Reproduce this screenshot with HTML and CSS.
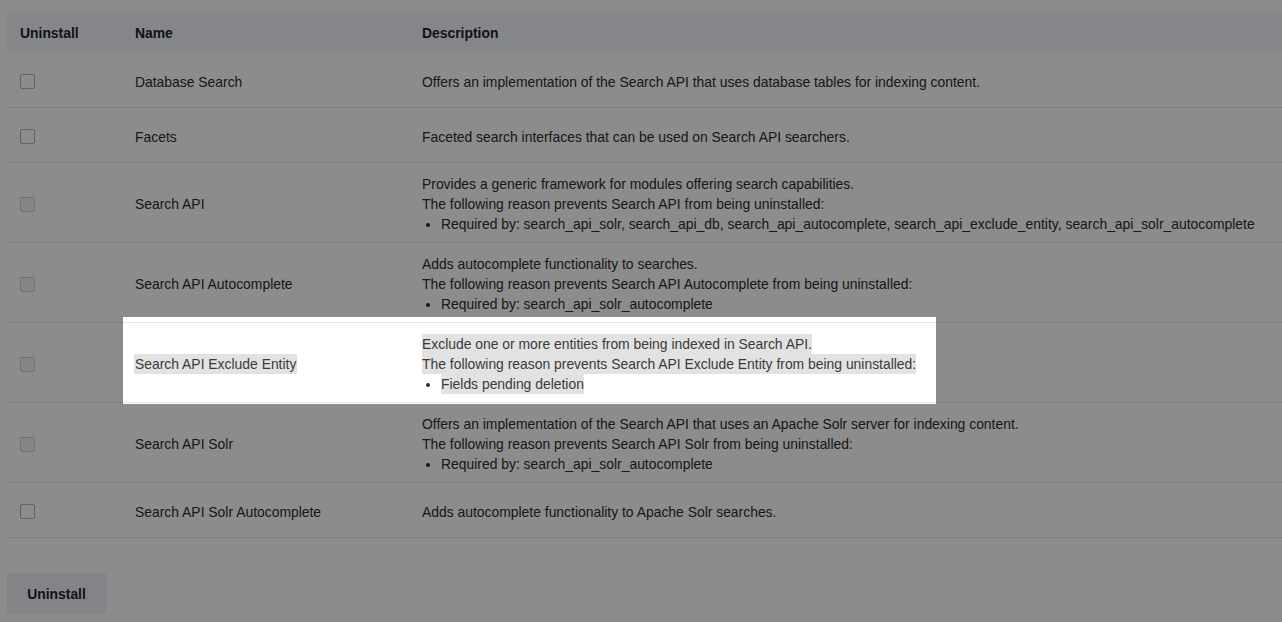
FILE: index.html
```html
<!DOCTYPE html>
<html lang="en">
<head>
<meta charset="utf-8">
<title>Uninstall modules</title>
<link rel="stylesheet" href="styles.css">
</head>
<body>
<main class="page">
  <div class="table-wrap">
    <table class="modules">
      <colgroup>
        <col class="col-check">
        <col class="col-name">
        <col class="col-desc">
      </colgroup>
      <thead>
        <tr>
          <th class="c-check">Uninstall</th>
          <th class="c-name">Name</th>
          <th class="c-desc">Description</th>
        </tr>
      </thead>
      <tbody>
        <tr class="row-single">
          <td class="c-check"><span class="cb"></span></td>
          <td class="c-name">Database Search</td>
          <td class="c-desc"><div class="line">Offers an implementation of the Search API that uses database tables for indexing content.</div></td>
        </tr>
        <tr class="row-single">
          <td class="c-check"><span class="cb"></span></td>
          <td class="c-name">Facets</td>
          <td class="c-desc"><div class="line">Faceted search interfaces that can be used on Search API searchers.</div></td>
        </tr>
        <tr>
          <td class="c-check"><span class="cb cb-disabled"></span></td>
          <td class="c-name">Search API</td>
          <td class="c-desc">
            <div class="line">Provides a generic framework for modules offering search capabilities.</div>
            <div class="line">The following reason prevents Search API from being uninstalled:</div>
            <ul class="reasons"><li>Required by: search_api_solr, search_api_db, search_api_autocomplete, search_api_exclude_entity, search_api_solr_autocomplete</li></ul>
          </td>
        </tr>
        <tr>
          <td class="c-check"><span class="cb cb-disabled"></span></td>
          <td class="c-name">Search API Autocomplete</td>
          <td class="c-desc">
            <div class="line">Adds autocomplete functionality to searches.</div>
            <div class="line">The following reason prevents Search API Autocomplete from being uninstalled:</div>
            <ul class="reasons"><li>Required by: search_api_solr_autocomplete</li></ul>
          </td>
        </tr>
        <tr class="row-focus">
          <td class="c-check"><span class="cb cb-disabled"></span></td>
          <td class="c-name"><span class="mark">Search API Exclude Entity</span></td>
          <td class="c-desc">
            <div class="line"><span class="mark">Exclude one or more entities from being indexed in Search API.</span></div>
            <div class="line"><span class="mark">The following reason prevents Search API Exclude Entity from being uninstalled:</span></div>
            <ul class="reasons"><li><span class="mark">Fields pending deletion</span></li></ul>
          </td>
        </tr>
        <tr>
          <td class="c-check"><span class="cb cb-disabled"></span></td>
          <td class="c-name">Search API Solr</td>
          <td class="c-desc">
            <div class="line">Offers an implementation of the Search API that uses an Apache Solr server for indexing content.</div>
            <div class="line">The following reason prevents Search API Solr from being uninstalled:</div>
            <ul class="reasons"><li>Required by: search_api_solr_autocomplete</li></ul>
          </td>
        </tr>
        <tr class="row-single">
          <td class="c-check"><span class="cb"></span></td>
          <td class="c-name">Search API Solr Autocomplete</td>
          <td class="c-desc"><div class="line">Adds autocomplete functionality to Apache Solr searches.</div></td>
        </tr>
      </tbody>
    </table>
    <div class="spotlight" aria-hidden="true"></div>
  </div>
  <div class="actions">
    <button class="btn" type="button">Uninstall</button>
  </div>
</main>
</body>
</html>
```

FILE: styles.css
```css
html, body {
  margin: 0;
  height: 100%;
  background: #ffffff;
}

body {
  font-family: "Liberation Sans", Arial, sans-serif;
  font-size: 13.9px;
  line-height: 20px;
  color: #2c2c2c;
  overflow: hidden;
}

.page {
  box-sizing: border-box;
  min-height: 100%;
  padding: 13px 0 0 7px;
}

.table-wrap {
  position: relative;
}

.modules {
  width: 100%;
  border-collapse: collapse;
  table-layout: fixed;
}

.col-check { width: 116px; }
.col-name { width: 287px; }

.modules th {
  background: #f3f4f9;
  color: #222330;
  font-weight: bold;
  text-align: left;
  height: 40px;
  padding: 0 12px;
  vertical-align: middle;
}

.modules th.c-check {
  padding-left: 13px;
}

.modules td {
  padding: 11px 12px 8px;
  vertical-align: middle;
  border-bottom: 1px solid #e6e6e6;
  white-space: nowrap;
}

.modules td.c-check {
  padding-left: 13px;
}

.row-single td {
  height: 35px;
}

.line {
  line-height: 20px;
}

.reasons {
  margin: 0;
  padding: 0 0 0 19px;
  list-style: disc;
}

.cb {
  display: block;
  width: 13px;
  height: 13px;
  border: 1px solid #b3b3b3;
  border-radius: 2px;
  background: #ffffff;
}

.cb-disabled {
  border-color: #cfcfcf;
  background: #f2f2f2;
}

.mark {
  display: inline-block;
  background: #e2e2e2;
  color: #3a3a3a;
}

.c-name .mark {
  margin-left: -1px;
  padding: 0 1px;
}

.spotlight {
  position: absolute;
  left: 116px;
  top: 304px;
  width: 813px;
  height: 87px;
  box-shadow: 0 0 0 3000px rgba(0, 0, 0, 0.45);
  pointer-events: none;
  z-index: 5;
}

.actions {
  padding-top: 35px;
}

.btn {
  height: 41px;
  width: 99px;
  padding: 0;
  border: 0;
  border-radius: 3px;
  background: #f0f0f8;
  color: #222330;
  font-family: "Liberation Sans", Arial, sans-serif;
  font-size: 13.9px;
  font-weight: bold;
}
```
